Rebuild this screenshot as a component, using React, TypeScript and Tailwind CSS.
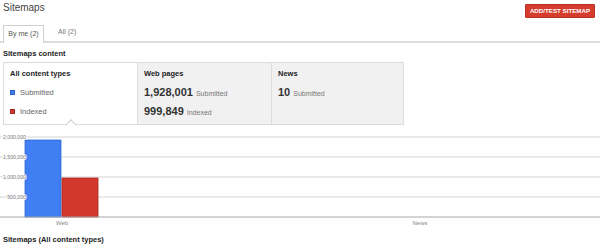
const font = { fontFamily: '"Liberation Sans", Arial, sans-serif' };

const gridLines = [
	{ y: 12, label: '2,000,000' },
	{ y: 32, label: '1,500,000' },
	{ y: 52, label: '1,000,000' },
	{ y: 72, label: '500,000' },
];

function Legend({ color, border, label }: { color: string; border: string; label: string }) {
	return (
		<div className="flex h-[19px] items-center pl-[6px]">
			<span className={`h-[5px] w-[5px] border ${color} ${border}`} />
			<span className="ml-[5px] text-[7.5px] text-[#666]">{label}</span>
		</div>
	);
}

function Stat({ value, label }: { value: string; label: string }) {
	return (
		<div className="flex h-[19px] items-center">
			<span className="text-[11px] font-bold leading-none text-[#333]">{value}</span>
			<span className="ml-[3px] mt-[2px] text-[7px] leading-none text-[#777]">{label}</span>
		</div>
	);
}

function Chart() {
	return (
		<svg width="600" height="110" className="block">
			{gridLines.map((g) => (
				<line key={g.y} x1="0" x2="600" y1={g.y} y2={g.y} stroke="#e3e3e3" strokeWidth="1.5" />
			))}
			<rect x="25" y="15" width="36" height="77" fill="#3f7ef3" stroke="#3468d0" strokeWidth="0.8" />
			<rect x="62" y="53" width="36" height="39" fill="#d3382c" stroke="#a82a20" strokeWidth="0.8" />
			<line x1="0" x2="600" y1="92" y2="92" stroke="#a8a8a8" strokeWidth="1" />
			{gridLines.map((g) => (
				<text
					key={g.label}
					x="26"
					y={g.y + 1.8}
					textAnchor="end"
					fontSize="5.2"
					fill="#777"
					stroke="#fff"
					strokeWidth="1.5"
					paintOrder="stroke"
					style={font}
				>
					{g.label}
				</text>
			))}
			<text x="62" y="100" textAnchor="middle" fontSize="6" fill="#888" style={font}>
				Web
			</text>
			<text x="420" y="100" textAnchor="middle" fontSize="6" fill="#888" style={font}>
				News
			</text>
		</svg>
	);
}

export default function App() {
	return (
		<div className="h-[248px] w-[600px] overflow-hidden bg-white" style={font}>
			<div className="flex h-[25px] items-start justify-between pl-[3px] pr-[5px]">
				<h1 className="pt-[2px] text-[10px] leading-[12px] text-[#444]">Sitemaps</h1>
				<button className="mt-[4px] h-[14px] w-[70px] rounded-[1px] border border-[#b63225] bg-[#d63c2e] text-[6.2px] font-bold text-white">
					ADD/TEST SITEMAP
				</button>
			</div>

			<div className="flex h-[18px] items-end border-b-2 border-[#dedede] pl-[3px]">
				<div className="-mb-[2px] flex h-[18px] w-[41px] items-center justify-center border border-b-0 border-[#d0d0d0] bg-white text-[7px] text-[#555]">
					By me (2)
				</div>
				<div className="flex h-[18px] items-center pl-[14px] text-[7px] text-[#777]">All (2)</div>
			</div>

			<div className="h-[19px] pl-[3px] pt-[6px] text-[7.5px] font-bold leading-[9px] text-[#222]">
				Sitemaps content
			</div>

			<div className="ml-[3px] flex h-[63px] w-[401px] border border-[#dcdcdc]">
				<div className="relative w-[133px] bg-white pt-px">
					<div className="flex h-[19px] items-center pl-[6px] text-[7.5px] font-bold text-[#222]">
						All content types
					</div>
					<Legend color="bg-[#3f7ef3]" border="border-[#2f62c8]" label="Submitted" />
					<Legend color="bg-[#d3382c]" border="border-[#a02a20]" label="Indexed" />
					<span className="absolute -bottom-[5px] left-[63px] h-[8px] w-[8px] rotate-45 border-l border-t border-[#cfcfcf] bg-white" />
				</div>
				<div className="w-[134px] border-l border-[#dcdcdc] bg-[#f1f1f1] pl-[6px] pt-px">
					<div className="flex h-[19px] items-center text-[7.5px] font-bold text-[#222]">Web pages</div>
					<Stat value="1,928,001" label="Submitted" />
					<Stat value="999,849" label="Indexed" />
				</div>
				<div className="flex-1 border-l border-[#dcdcdc] bg-[#f1f1f1] pl-[6px] pt-px">
					<div className="flex h-[19px] items-center text-[7.5px] font-bold text-[#222]">News</div>
					<Stat value="10" label="Submitted" />
				</div>
			</div>

			<Chart />

			<div className="pl-[3px] text-[7.5px] font-bold leading-[9px] text-[#222]">
				Sitemaps (All content types)
			</div>
		</div>
	);
}
